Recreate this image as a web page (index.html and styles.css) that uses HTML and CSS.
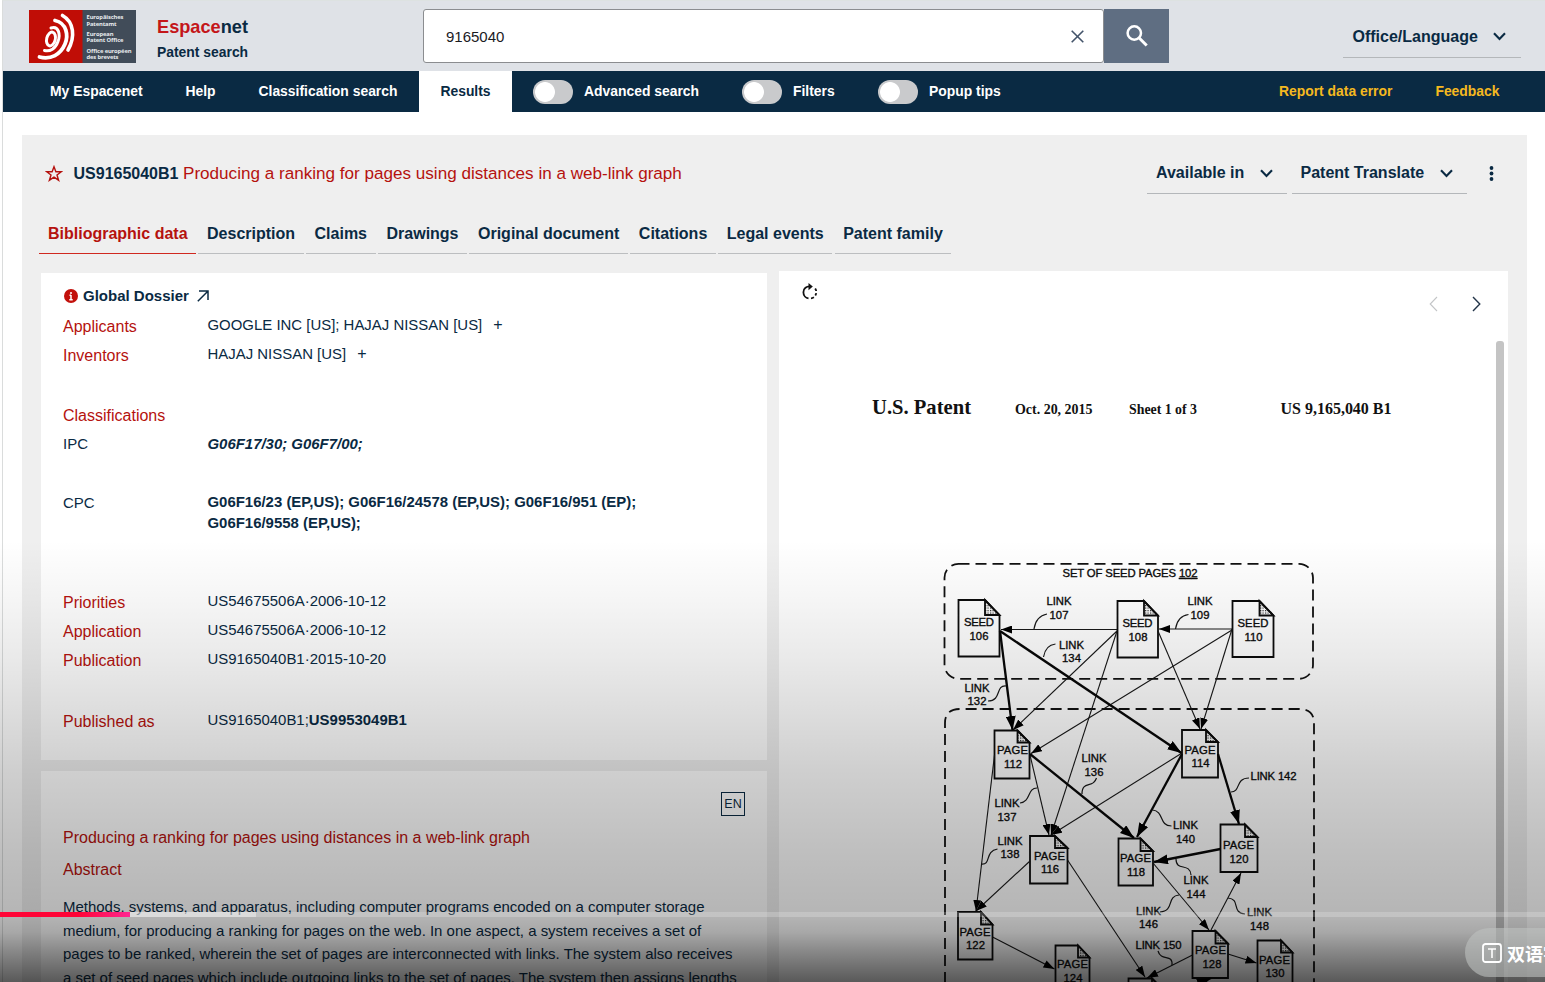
FILE: index.html
```html
<!DOCTYPE html>
<html lang="en">
<head>
<meta charset="utf-8">
<title>Espacenet Patent search</title>
<link rel="stylesheet" href="styles.css">
</head>
<body>
<div class="page">
  <header class="header">
    <svg class="logo" viewBox="0 0 107 53" width="107" height="53">
      <rect width="54" height="53" fill="#c00d06"/>
      <rect x="53.500" width="53.500" height="53" fill="#414c59"/>
      <g fill="none" stroke="#fff" stroke-linecap="round">
        <ellipse cx="22" cy="29" rx="4.300" ry="7" stroke-width="3" transform="rotate(14 22 29)"/>
        <path d="M22 18C30 15.500 31.500 25 29 31.500C26.500 38.500 21 42 15.500 40.500" stroke-width="3"/>
        <path d="M26 10.500C38 13 39.500 26 36 34C31.500 44.500 22 50 10.500 47" stroke-width="3.800"/>
        <path d="M33.500 5.500C45 12 46.500 27 39 40" stroke-width="3.600"/>
      </g>
      <g class="logo-text">
        <text x="57.500" y="9" textLength="37">Europäisches</text>
        <text x="57.500" y="15.600" textLength="30">Patentamt</text>
        <text x="57.500" y="26" textLength="27">European</text>
        <text x="57.500" y="32.400" textLength="37">Patent Office</text>
        <text x="57.500" y="42.600" textLength="45">Office européen</text>
        <text x="57.500" y="49" textLength="32">des brevets</text>
      </g>
    </svg>
    <div class="brand">
      <div class="brand-name"><span class="red">Espace</span>net</div>
      <div class="brand-sub">Patent search</div>
    </div>
    <div class="search">
      <div class="search-field"><span>9165040</span>
        <svg width="13" height="13" viewBox="0 0 13 13"><path d="M.7.700l11.600 11.600M12.300.700L.7 12.300" stroke="#43546a" stroke-width="1.600"/></svg>
      </div>
      <div class="search-button">
        <svg width="24" height="24" viewBox="0 0 24 24"><circle cx="9.300" cy="9" r="6.700" fill="none" stroke="#fff" stroke-width="2.500"/><path d="M14.200 14l7.500 7.500" stroke="#fff" stroke-width="3"/></svg>
      </div>
    </div>
    <div class="drop drop-lang">Office/Language<svg class="chev" viewBox="0 0 13 9"><path d="M1 1.200l5.500 5.800L12 1.200"/></svg></div>
  </header>

  <nav class="nav">
    <a class="n1">My Espacenet</a><a class="n2">Help</a><a class="n3">Classification search</a><a class="active">Results</a>
    <span class="toggle t1"><i></i>Advanced search</span>
    <span class="toggle t2"><i></i>Filters</span>
    <span class="toggle t3"><i></i>Popup tips</span>
    <span class="nav-right"><a>Report data error</a><a>Feedback</a></span>
  </nav>

  <main class="panel">
    <div class="title-row">
      <svg width="18" height="17" viewBox="0 0 18 17"><path d="M9 1.700l1.900 5h5.400l-4.300 3.300 1.600 5.200L9 12.100l-4.600 3.100L6 10 1.700 6.700h5.400z" fill="none" stroke="#b5120e" stroke-width="1.400"/></svg>
      <b>US9165040B1</b><span class="doc-title">Producing a ranking for pages using distances in a web-link graph</span>
      <div class="drop drop-avail">Available in<svg class="chev" viewBox="0 0 13 9"><path d="M1 1.200l5.500 5.800L12 1.200"/></svg></div>
      <div class="drop drop-trans">Patent Translate<svg class="chev" viewBox="0 0 13 9"><path d="M1 1.200l5.500 5.800L12 1.200"/></svg></div>
      <svg class="kebab" width="5" height="15" viewBox="0 0 5 15"><circle cx="2.500" cy="2" r="1.900"/><circle cx="2.500" cy="7.500" r="1.900"/><circle cx="2.500" cy="13" r="1.900"/></svg>
    </div>
    <div class="tabs">
      <a class="on">Bibliographic data</a><a>Description</a><a>Claims</a><a>Drawings</a><a>Original document</a><a>Citations</a><a>Legal events</a><a>Patent family</a>
    </div>
    <div class="columns">
      <div class="left">
        <section class="card bib">
          <div class="dossier">
            <svg width="14" height="14" viewBox="0 0 14 14"><circle cx="7" cy="7" r="7" fill="#c2100b"/><path d="M7 3v2M7 6v5M5.500 6.300H7M5.300 10.700h3.400" stroke="#fff" stroke-width="1.500"/></svg>
            <b>Global Dossier</b>
            <svg width="12" height="12" viewBox="0 0 12 12"><path d="M.8 11.200L10.800 1.200M2 1h9v9" fill="none" stroke="#0a2a43" stroke-width="1.500"/></svg>
          </div>
          <dl>
            <div class="row"><dt>Applicants</dt><dd>GOOGLE INC [US]; HAJAJ NISSAN [US]<span class="plus">+</span></dd></div>
            <div class="row"><dt>Inventors</dt><dd>HAJAJ NISSAN [US]<span class="plus">+</span></dd></div>
            <div class="row gap31"><dt>Classifications</dt></div>
            <div class="row class"><dt>IPC</dt><dd><b><i>G06F17/30; G06F7/00;</i></b></dd></div>
            <div class="row class cpc"><dt>CPC</dt><dd><b>G06F16/23 (EP,US); G06F16/24578 (EP,US); G06F16/951 (EP);<br>G06F16/9558 (EP,US);</b></dd></div>
            <div class="row prio"><dt>Priorities</dt><dd>US54675506A·2006-10-12</dd></div>
            <div class="row"><dt>Application</dt><dd>US54675506A·2006-10-12</dd></div>
            <div class="row"><dt>Publication</dt><dd>US9165040B1·2015-10-20</dd></div>
            <div class="row gap32"><dt>Published as</dt><dd>US9165040B1;<b>US9953049B1</b></dd></div>
          </dl>
        </section>
        <section class="card abstract">
          <div class="lang">EN</div>
          <h2>Producing a ranking for pages using distances in a web-link graph</h2>
          <h3>Abstract</h3>
          <p>Methods, systems, and apparatus, including computer programs encoded on a computer storage<br>medium, for producing a ranking for pages on the web. In one aspect, a system receives a set of<br>pages to be ranked, wherein the set of pages are interconnected with links. The system also receives<br>a set of seed pages which include outgoing links to the set of pages. The system then assigns lengths</p>
        </section>
      </div>

      <section class="viewer">
        <div class="tools">
          <svg class="rotate" width="16" height="17" viewBox="0 0 16 17" fill="none" stroke="#111" stroke-width="1.800"><path d="M8.500 3.500C4.500 3 1.400 5.500 1.400 9.200C1.400 12.700 3.800 15 6.500 15.300"/><path d="M9 15.300c1-.1 2-.5 2.900-1.100M13.300 12.500c.5-.8.8-1.500.9-2.300M14.200 8c-.1-.9-.5-1.700-1-2.500"/><path d="M6.500 0L10.800 3.600L6.500 7.200z" fill="#111" stroke="none"/></svg>
          <svg width="9" height="16" viewBox="0 0 9 16"><path d="M8 1L1.200 8 8 15" fill="none" stroke="#c3c5c7" stroke-width="1.100"/></svg>
          <svg width="9" height="16" viewBox="0 0 9 16"><path d="M1 1l6.800 7L1 15" fill="none" stroke="#24364a" stroke-width="1.400"/></svg>
        </div>
        <svg class="sheet" viewBox="779 341 729 641" width="729" height="641">
          <defs>
            <marker id="thin" markerUnits="userSpaceOnUse" markerWidth="11" markerHeight="8" refX="11" refY="4" orient="auto"><path d="M0 0L11 4L0 8z"/></marker>
            <marker id="thick" markerUnits="userSpaceOnUse" markerWidth="14" markerHeight="10" refX="14" refY="5" orient="auto"><path d="M0 0L14 5L0 10z"/></marker>
            <pattern id="dots" width="2.500" height="2.500" patternUnits="userSpaceOnUse"><rect width="1.200" height="1.200" fill="#222"/></pattern>
          </defs>
          <rect x="1496" y="341" width="8" height="660" rx="3" fill="#c4c4c4"/>
          <g class="sheet-head">
            <text x="872" y="414" font-size="21" textLength="99" lengthAdjust="spacingAndGlyphs">U.S. Patent</text>
            <text x="1015" y="414" font-size="14" textLength="77.500" lengthAdjust="spacingAndGlyphs">Oct. 20, 2015</text>
            <text x="1129" y="414" font-size="14" textLength="68" lengthAdjust="spacingAndGlyphs">Sheet 1 of 3</text>
            <text x="1280.500" y="414" font-size="16" textLength="111" lengthAdjust="spacingAndGlyphs">US 9,165,040 B1</text>
          </g>
          <g fill="none" stroke="#111" stroke-width="1.800" stroke-dasharray="11 6">
            <rect x="944.500" y="563.800" width="368.500" height="115" rx="14"/>
            <path d="M945 1000V723Q945 709 960 709H1299Q1314 709 1314 723V1000"/>
          </g>
          <g class="nodes">
            <path d="M958.500 600H985l14.500 15v41.500h-41z"/><path class="f" d="M985 600v15h14.500z"/>
            <path d="M1117.500 601H1144l14 14.500V657.500h-40.500z"/><path class="f" d="M1144 601v14.500h14z"/>
            <path d="M1232.500 601H1259.500l14 14.500V657h-41z"/><path class="f" d="M1259.500 601v14.500h14z"/>
            <path d="M994.500 730.500H1017.500l12 12v36h-35z"/><path class="f" d="M1017.500 730.500v12h12z"/>
            <path d="M1182 730H1206l12 12v35.500h-36z"/><path class="f" d="M1206 730v12h12z"/>
            <path d="M1030 836H1055l12.500 12v35.500h-37.500z"/><path class="f" d="M1055 836v12h12.500z"/>
            <path d="M1118.500 838.500H1140.500l12.500 12.500v34.500h-34.500z"/><path class="f" d="M1140.500 838.500v12.500h12.500z"/>
            <path d="M1220.500 824.500H1245l12.500 12.500v35h-37z"/><path class="f" d="M1245 824.500v12.500h12.500z"/>
            <path d="M958 912H981l11.500 12.500v35h-34.500z"/><path class="f" d="M981 912v12.500h11.500z"/>
            <path d="M1055.500 945.500H1078l11.500 12V993h-34z"/><path class="f" d="M1078 945.500v12h11.500z"/>
            <path d="M1192.500 931H1215.500l12.500 12.500v34.500h-35.500z"/><path class="f" d="M1215.500 931v12.500h12.500z"/>
            <path d="M1257.500 940.500H1281l11.500 12V990h-35z"/><path class="f" d="M1281 940.500v12h11.500z"/>
            <path d="M1128.500 990V978.500H1152l10 10"/><path class="f" d="M1152 978.500v10h10z"/>
          </g>
          <g class="edges">
            <path d="M1117 629.500H1001"/><path d="M1232 629H1159"/>
            <path d="M1117 631L1013 730"/><path d="M1117 631L1051 835"/>
            <path d="M1158 631L1200 729"/><path d="M1232 629L1201 729"/>
            <path d="M1232 630L1031 753.500"/><path d="M1182 753L1051 835"/>
            <path d="M1030 755L1049 835"/><path d="M994.500 755L976 911"/>
            <path d="M1030 861L976 911"/><path d="M1067.500 860L1145 977"/>
            <path d="M992.500 937L1054.500 969"/><path d="M1153 863L1209 930"/>
            <path d="M1211 930L1241 873"/><path d="M1192.500 955L1147 978"/>
            <path d="M1228 954L1256.500 963"/>
          </g>
          <g class="bold-edges">
            <path d="M1000 631L1012.500 730"/><path d="M1000 631L1181.500 753"/>
            <path d="M1030 754L1134 838"/><path d="M1182 754L1137 837"/>
            <path d="M1218 754L1239 824"/><path d="M1220.500 849L1154 862"/>
            <path d="M1202 982L1211 978"/>
          </g>
          <g class="leaders">
            <path d="M1034 629q2-13 13-15"/><path d="M1175.500 629q2-13 13-14.500"/>
            <path d="M1043.500 657q2-12 12-13"/><path d="M1006 686c-11-1-4 15-18 15"/>
            <path d="M1082 794c0-14 11-5 14.500-16"/><path d="M1037 788c-10 0-6 14-17 15"/>
            <path d="M1152.500 810c12 1 6 16 19 16"/><path d="M1231 792c10 0 4-14 18-14"/>
            <path d="M981.500 864c10 1 3-13 16-15"/><path d="M1176 859c0 13 14 3 15 16"/>
            <path d="M1179 895c-13 1-4 16-19 17"/><path d="M1228 898c13 1 3 15 17 16"/>
            <path d="M1172 965c1-12-11-3-14-14"/>
          </g>
          <g class="labels" transform="translate(0 -.6)">
            <text x="1130" y="577.500" textLength="135">SET OF SEED PAGES <tspan text-decoration="underline">102</tspan></text>
            <text x="979" y="627" textLength="30">SEED</text><text x="979" y="640.500">106</text>
            <text x="1137.500" y="628" textLength="30">SEED</text><text x="1138" y="642">108</text>
            <text x="1253" y="628" textLength="31">SEED</text><text x="1253.500" y="642">110</text>
            <text x="1059" y="606">LINK</text><text x="1059" y="620">107</text>
            <text x="1200" y="606">LINK</text><text x="1200" y="620">109</text>
            <text x="1071.500" y="649.500">LINK</text><text x="1071.500" y="662.500">134</text>
            <text x="977" y="692.500">LINK</text><text x="977" y="706">132</text>
            <text x="1012.500" y="755" textLength="31">PAGE</text><text x="1013" y="768.500">112</text>
            <text x="1200" y="754.500" textLength="31">PAGE</text><text x="1200.500" y="768">114</text>
            <text x="1094" y="763">LINK</text><text x="1094" y="776.500">136</text>
            <text x="1007" y="808">LINK</text><text x="1007" y="822">137</text>
            <text x="1273.500" y="781" textLength="46">LINK 142</text>
            <text x="1185.500" y="830">LINK</text><text x="1185.500" y="843.500">140</text>
            <text x="1010" y="846">LINK</text><text x="1010" y="859">138</text>
            <text x="1049.500" y="861" textLength="31">PAGE</text><text x="1050" y="874">116</text>
            <text x="1135.500" y="863" textLength="31">PAGE</text><text x="1136" y="876.500">118</text>
            <text x="1238.500" y="850" textLength="31">PAGE</text><text x="1239" y="863.500">120</text>
            <text x="1196" y="885">LINK</text><text x="1196" y="898.500">144</text>
            <text x="1148.500" y="915.500">LINK</text><text x="1148.500" y="929">146</text>
            <text x="1259.500" y="917">LINK</text><text x="1259.500" y="931">148</text>
            <text x="975" y="936.500" textLength="31">PAGE</text><text x="975.500" y="950">122</text>
            <text x="1072.500" y="969" textLength="31">PAGE</text><text x="1073" y="982.500">124</text>
            <text x="1210.500" y="955" textLength="31">PAGE</text><text x="1212" y="969">128</text>
            <text x="1274.500" y="964.500" textLength="31">PAGE</text><text x="1275" y="978">130</text>
            <text x="1158.500" y="950" textLength="46">LINK 150</text>
          </g>
        </svg>
      </section>
    </div>
  </main>
</div>

<div class="shade"></div>
<div class="progress"><div class="loaded"></div><div class="played"></div></div>
<div class="subtitle-pill">
  <svg width="20" height="20" viewBox="0 0 20 20" fill="none" stroke="#fff"><rect x="1" y="1" width="18" height="18" rx="2.500" stroke-width="1.800"/><path d="M6 6h8M10 6v9" stroke-width="1.600"/></svg>
  <span>双语字幕</span>
</div>
</body>
</html>
```
FILE: styles.css
```css
* { box-sizing: border-box; }
body {
  margin: 0;
  width: 1545px;
  height: 982px;
  overflow: hidden;
  position: relative;
  background: #fff;
  color: #0a2a43;
  font-family: "Liberation Sans", Arial, sans-serif;
}
.page {
  margin-left: 2px;
  height: 982px;
  overflow: hidden;
  border-left: 1px solid #dadcdc;
  border-top: 1px solid #dde2e1;
}
svg { flex: none; }
.red { color: #c4161a; }

/* header */
.header {
  display: flex;
  height: 70px;
  background: #dfe2e7;
}
.logo { margin: 8.500px 0 0 25.500px; }
.logo-text { font: bold 5.800px "Open Sans", sans-serif; fill: #e8ebee; }
.brand { margin: 15px 0 0 21.500px; width: 266px; font-weight: bold; }
.brand-name { font-size: 18.200px; line-height: 22px; }
.brand-sub { font-size: 13.900px; line-height: 18px; margin-top: 5px; }
.search { display: flex; margin-top: 8px; height: 54px; }
.search-field {
  width: 681px;
  display: flex;
  align-items: center;
  justify-content: space-between;
  padding: 0 19px 0 22px;
  border: 1px solid #8b8d90;
  border-radius: 3px;
  background: #fff;
  color: #1b1b1f;
  font-size: 15px;
}
.search-button {
  width: 65px;
  height: 54px;
  display: flex;
  align-items: center;
  justify-content: center;
  background: #5f6e82;
}
.drop {
  display: flex;
  justify-content: space-between;
  align-items: center;
  border-bottom: 1px solid #b4b7ba;
  font-size: 16px;
  font-weight: bold;
}
.chev { width: 13px; height: 9px; fill: none; stroke: #0a2a43; stroke-width: 2.100; }
.drop-lang { margin: 14px 0 0 174px; width: 178px; height: 43px; padding: 1px 15px 0 9.500px; }

/* navigation bar */
.nav {
  display: flex;
  height: 41px;
  line-height: 41px;
  background: #0a2a43;
  color: #fff;
  font-size: 13.900px;
  font-weight: bold;
  white-space: nowrap;
}
.n1 { margin-left: 47px; width: 135.500px; }
.n2 { width: 73px; }
.n3 { width: 160.500px; }
.nav .active { width: 93px; text-align: center; background: #fff; color: #0a2a43; }
.toggle { display: flex; align-items: center; }
.toggle i {
  width: 40px;
  height: 24px;
  margin-right: 11px;
  border-radius: 12px;
  background: radial-gradient(circle at 12px 12px, #fff 9.500px, #c9cacc 10.300px);
}
.t1 { margin-left: 21px; width: 209px; }
.t2 { width: 136px; }
.nav-right { margin-left: auto; margin-right: 45.500px; display: flex; gap: 43px; color: #f5b91f; }

/* document panel */
.panel {
  margin: 23px 18px 0 19px;
  height: 860px;
  background: #efefef;
}
.title-row {
  display: flex;
  align-items: center;
  height: 77px;
  padding-left: 23px;
  font-size: 16px;
  white-space: nowrap;
}
.title-row b { margin-left: 10.500px; width: 109.500px; }
.doc-title { color: #b5120e; font-size: 17.100px; width: 964px; }
.title-row .drop { height: 42px; margin-top: 17px; padding-top: 1px; align-self: flex-start; }
.title-row .drop-avail { width: 140px; padding-left: 9px; padding-right: 14.500px; }
.title-row .drop-trans { width: 175px; margin-left: 5px; padding-left: 8.500px; padding-right: 14.500px; }
.kebab { margin-left: 21.500px; fill: #0a2a43; }
.tabs { display: flex; gap: 2.300px; margin-left: 17.400px; }
.tabs a {
  height: 42px;
  padding: 0 8.600px;
  line-height: 43px;
  border-bottom: 1px solid #bcbec0;
  font-size: 16px;
  font-weight: bold;
  white-space: nowrap;
}
.tabs .on { color: #b5120e; border-bottom-color: #d0281f; }
.columns { display: flex; align-items: flex-start; gap: 12px; padding: 17px 0 0 19px; }
.left { width: 726px; padding-top: 2px; }
.card { background: #fff; padding-left: 22px; }
.bib { height: 487px; padding-top: 7.500px; }
.dossier { display: flex; align-items: center; height: 31.500px; font-size: 15px; padding-left: 1px; padding-bottom: 1px; }
.dossier b { margin: 0 8.500px 0 5px; }
.dossier svg { margin-top: 1px; }
dl { margin: 0; }
.row { display: flex; height: 29px; }
dt { width: 144.500px; font-size: 16px; line-height: 30px; color: #b5120e; }
dd { margin: 0; font-size: 14.950px; line-height: 26px; white-space: nowrap; }
.plus { margin-left: 11px; font-size: 16px; line-height: 1; }
.gap31 { margin-top: 31px; }
.gap32 { margin-top: 32px; }
.class dt { font-size: 15px; line-height: 27px; color: #0a2a43; }
.class dd { line-height: 27px; }
.cpc { margin-top: 30px; height: 50px; }
.cpc dd { line-height: 20.500px; padding-top: 3.200px; }
.prio { margin-top: 49px; }

.abstract { margin-top: 11px; height: 300px; padding-top: 21px; }
.lang {
  width: 24px;
  height: 24px;
  margin-left: 658px;
  border: 1.500px solid #0a2a43;
  font-size: 12.500px;
  line-height: 23px;
  text-align: center;
}
h2, h3 { margin: 0; font-weight: normal; font-size: 16px; color: #b5120e; line-height: 20px; }
h2 { margin-top: 12px; }
h3 { margin-top: 12px; }
p { margin: 15px 0 0; font-size: 14.980px; line-height: 23.500px; white-space: nowrap; }

/* drawing viewer */
.viewer { width: 729px; height: 720px; background: #fff; overflow: hidden; }
.tools { display: flex; align-items: center; height: 70px; padding: 0 27.500px 5px 22.500px; gap: 34px; }
.rotate { margin: -24px auto 0 0; }
.sheet { display: block; }
.sheet-head { font-family: "Liberation Serif", serif; font-weight: bold; fill: #111; }
.nodes { fill: none; stroke: #0c0c0c; stroke-width: 1.800; }
.nodes .f { fill: url(#dots); }
.edges path { fill: none; stroke: #181818; stroke-width: 1.100; marker-end: url(#thin); }
.bold-edges path { fill: none; stroke: #080808; stroke-width: 2.300; marker-end: url(#thick); }
.leaders { fill: none; stroke: #181818; stroke-width: 1.200; }
.labels { font-size: 11.300px; text-anchor: middle; fill: #0c0c0c; stroke: #0c0c0c; stroke-width: .35; }

/* player overlay */
.shade {
  position: absolute;
  inset: 540px 0 0 0;
  background: linear-gradient(rgba(0,0,0,0) 0, rgba(0,0,0,.04) 60px, rgba(0,0,0,.085) 120px, rgba(0,0,0,.14) 180px, rgba(0,0,0,.19) 230px, rgba(0,0,0,.25) 310px, rgba(0,0,0,.29) 375px, rgba(0,0,0,.34) 392px, rgba(0,0,0,.47) 412px, rgba(0,0,0,.65) 442px);
}
.progress { position: absolute; left: 0; top: 912px; width: 1545px; height: 5px; background: rgba(255,255,255,.2); }
.loaded { width: 256px; height: 5px; background: rgba(255,255,255,.4); }
.played { width: 130px; height: 5px; margin-top: -5px; background: linear-gradient(90deg, #ff0436 0, #ff0436 60%, #ff2791 100%); }
.subtitle-pill {
  position: absolute;
  left: 1465px;
  top: 928px;
  width: 80px;
  height: 49px;
  display: flex;
  align-items: center;
  gap: 5px;
  padding: 1px 0 0 17px;
  overflow: hidden;
  border-radius: 25px 0 0 25px;
  background: rgba(190,194,192,.6);
  color: #fff;
  font: bold 18px "Noto Sans CJK SC", sans-serif;
  white-space: nowrap;
}
```
